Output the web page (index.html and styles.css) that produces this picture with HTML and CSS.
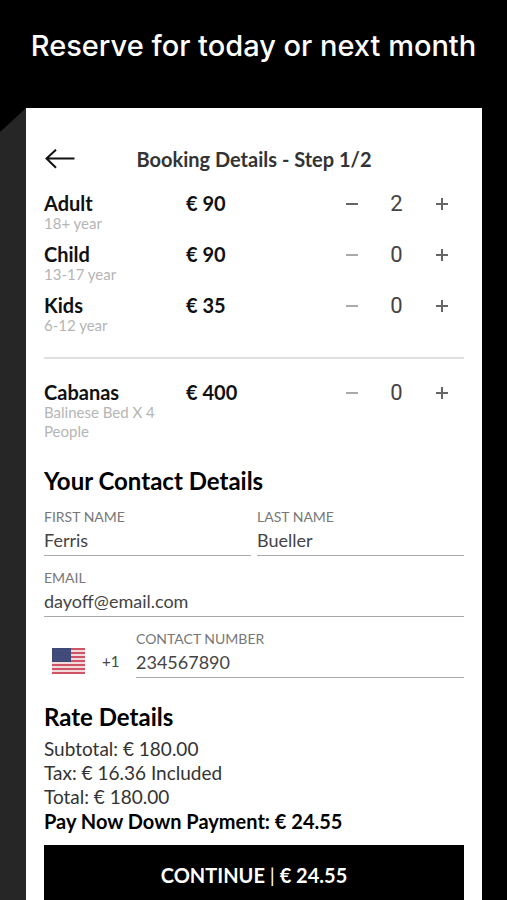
FILE: index.html
```html
<!DOCTYPE html>
<html lang="en">
<head>
<meta charset="utf-8">
<meta name="viewport" content="width=device-width, initial-scale=1">
<title>Booking Details</title>
<link rel="stylesheet" href="styles.css">
</head>
<body>
<h1 class="headline">Reserve for today or next month</h1>
<div class="stage">
  <div class="edge"></div>
  <main class="panel">
    <header class="topbar">
      <button class="back" type="button" aria-label="Back">
        <svg width="31" height="20" viewBox="0 0 31 20" fill="none" stroke="#111" stroke-width="2"><path d="M30.500 9.500H2.500M12 .7L2.500 9.500L12 18.800"/></svg>
      </button>
      <h2 class="title">Booking Details - Step 1/2</h2>
    </header>

    <section class="items">
      <div class="item">
        <div><div class="name">Adult</div><div class="note">18+ year</div></div>
        <div class="price">€ 90</div>
        <div class="stepper">
          <button type="button" aria-label="Remove adult"><svg width="12" height="12" viewBox="0 0 12 12"><path d="M0 6H12"/></svg></button>
          <output>2</output>
          <button type="button" aria-label="Add adult"><svg width="12" height="12" viewBox="0 0 12 12"><path d="M0 6H12M6 0V12"/></svg></button>
        </div>
      </div>
      <div class="item">
        <div><div class="name">Child</div><div class="note">13-17 year</div></div>
        <div class="price">€ 90</div>
        <div class="stepper">
          <button type="button" aria-label="Remove child" disabled><svg width="12" height="12" viewBox="0 0 12 12"><path d="M0 6H12"/></svg></button>
          <output>0</output>
          <button type="button" aria-label="Add child"><svg width="12" height="12" viewBox="0 0 12 12"><path d="M0 6H12M6 0V12"/></svg></button>
        </div>
      </div>
      <div class="item">
        <div><div class="name">Kids</div><div class="note">6-12 year</div></div>
        <div class="price">€ 35</div>
        <div class="stepper">
          <button type="button" aria-label="Remove kid" disabled><svg width="12" height="12" viewBox="0 0 12 12"><path d="M0 6H12"/></svg></button>
          <output>0</output>
          <button type="button" aria-label="Add kid"><svg width="12" height="12" viewBox="0 0 12 12"><path d="M0 6H12M6 0V12"/></svg></button>
        </div>
      </div>
    </section>

    <section class="items extras">
      <div class="item">
        <div><div class="name">Cabanas</div><div class="note">Balinese Bed X 4 People</div></div>
        <div class="price">€ 400</div>
        <div class="stepper">
          <button type="button" aria-label="Remove cabana" disabled><svg width="12" height="12" viewBox="0 0 12 12"><path d="M0 6H12"/></svg></button>
          <output>0</output>
          <button type="button" aria-label="Add cabana"><svg width="12" height="12" viewBox="0 0 12 12"><path d="M0 6H12M6 0V12"/></svg></button>
        </div>
      </div>
    </section>

    <form class="contact">
      <h3 class="heading">Your Contact Details</h3>
      <div class="fields">
        <div class="pair">
          <div class="field"><label for="first">FIRST NAME</label><input id="first" type="text" value="Ferris"></div>
          <div class="field"><label for="last">LAST NAME</label><input id="last" type="text" value="Bueller"></div>
        </div>
        <div class="field"><label for="email">EMAIL</label><input id="email" type="email" value="dayoff@email.com"></div>
        <div class="phone">
          <button class="country" type="button">
            <svg width="33" height="26" viewBox="0 0 33 26">
              <path fill="#f3dadd" d="M0 0H33V26H0z"/>
              <path stroke="#cd5566" stroke-width="2" d="M0 1H33M0 5H33M0 9H33M0 13H33M0 17H33M0 21H33M0 25H33"/>
              <path fill="#3f4a78" d="M0 0H19V14H0z"/>
              <path stroke="#515b86" stroke-width="1" stroke-dasharray="1 2" d="M2 3H18M3 6H18M2 9H18M3 12H18"/>
            </svg>
            <span>+1</span>
          </button>
          <div class="field"><label for="tel">CONTACT NUMBER</label><input id="tel" type="tel" value="234567890"></div>
        </div>
      </div>
    </form>

    <section class="rates">
      <h3 class="heading">Rate Details</h3>
      <p>Subtotal: € 180.00</p>
      <p>Tax: € 16.36 Included</p>
      <p>Total: € 180.00</p>
      <p class="due">Pay Now Down Payment: € 24.55</p>
    </section>
    <button class="continue" type="button">CONTINUE <span class="bar">|</span> € 24.55</button>
  </main>
</div>
</body>
</html>
```
FILE: styles.css
```css
* { box-sizing: border-box; }

body {
  margin: 0;
  background: #000;
  color: #111;
  font-family: Lato, "Liberation Sans", sans-serif;
  font-size: 18px;
  line-height: 24px;
}

h1, h2, h3, p { margin: 0; }

button, input {
  font: inherit;
  color: inherit;
  background: none;
  border: 0;
  border-radius: 0;
  padding: 0;
}

.headline {
  padding: 28px 0 44px;
  color: #fff;
  font-family: Inter, sans-serif;
  font-size: 29px;
  font-weight: 500;
  line-height: 36px;
  text-align: center;
  white-space: nowrap;
}

.stage {
  display: grid;
  grid-template-columns: 26px 1fr 25px;
}

.edge {
  background: #262626;
  clip-path: polygon(0 24px, 100% 0, 100% 100%, 0 100%);
}

.panel {
  background: #fff;
  padding: 36px 18px 0;
}

.topbar {
  display: grid;
  grid-template-columns: 31px 1fr 31px;
  align-items: center;
  margin-bottom: 18px;
}

.back { display: flex; }

.title {
  color: #333;
  font-size: 20px;
  font-weight: 700;
  line-height: 30px;
  text-align: center;
}

.items {
  display: grid;
  gap: 10px;
}

.extras {
  margin-top: 22px;
  padding-top: 22px;
  border-top: 2px solid #e0e0e0;
}

.item {
  display: grid;
  grid-template-columns: 142px 1fr 135px;
  align-items: start;
}

.name, .price {
  font-size: 20px;
  font-weight: 700;
  line-height: 22px;
}

.note {
  color: #b5b5b5;
  font-size: 15px;
  line-height: 19px;
}

.stepper {
  display: grid;
  grid-template-columns: repeat(3, 1fr);
  justify-items: center;
  align-items: center;
  color: #444;
  font-family: Roboto, sans-serif;
  font-size: 22px;
}

.stepper button {
  display: flex;
  padding: 6px;
}

.stepper svg {
  stroke: #666;
  stroke-width: 2;
}

.stepper button:disabled svg { stroke: #aaa; }

.contact { margin-top: 26px; }

.rates { margin-top: 25px; }

.heading {
  color: #000;
  font-size: 24px;
  font-weight: 700;
  line-height: 28px;
}

.fields {
  display: grid;
  gap: 13px;
  margin-top: 13px;
}

.pair {
  display: grid;
  grid-template-columns: 1fr 1fr;
  gap: 6px;
}

.field {
  display: grid;
  color: #444;
}

.field label {
  color: #777;
  font-size: 14px;
  line-height: 18px;
}

.field input {
  width: 100%;
  height: 30px;
  padding-bottom: 2px;
  border-bottom: 1px solid #aaa;
}

.phone {
  display: grid;
  grid-template-columns: 92px 1fr;
}

.country {
  display: flex;
  align-items: center;
  gap: 17px;
  padding: 14px 0 0 8px;
  color: #444;
  font-size: 15px;
}

.rates .heading { margin-bottom: 6px; }

.rates p {
  color: #333;
  font-size: 19px;
}

.rates .due {
  color: #000;
  font-size: 20px;
  font-weight: 700;
}

.continue {
  display: block;
  width: 100%;
  margin-top: 12px;
  padding: 18px;
  background: #000;
  color: #fff;
  font-size: 20px;
  font-weight: 700;
}

.bar { font-weight: 400; }
```
